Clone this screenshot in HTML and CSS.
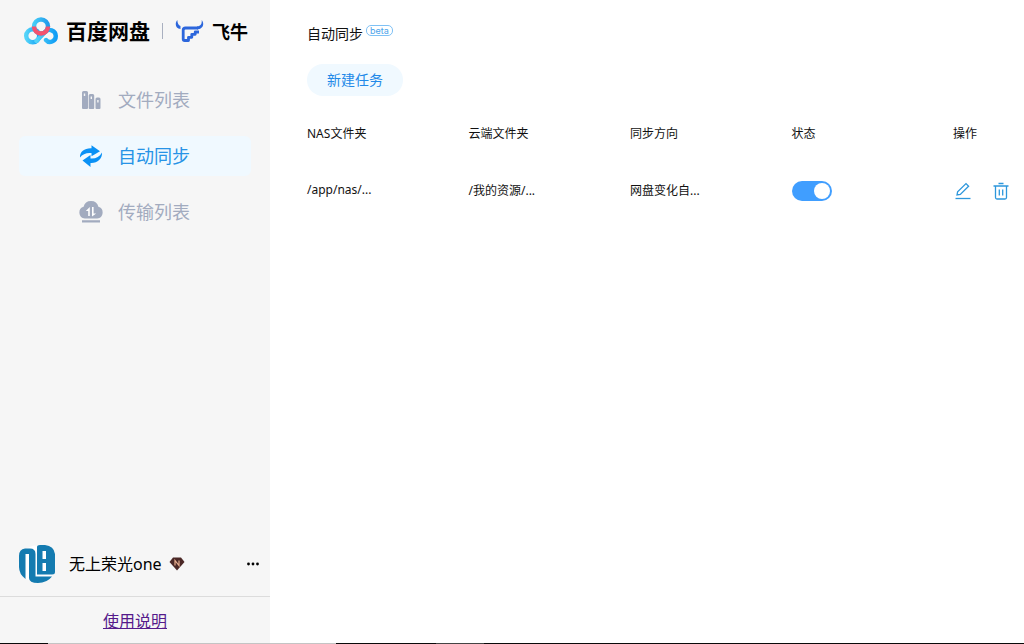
FILE: index.html
```html
<!DOCTYPE html>
<html lang="zh-CN">
<head>
<meta charset="utf-8">
<title>自动同步</title>
<link rel="stylesheet" href="styles.css">
</head>
<body>
<div class="app">
  <aside class="sidebar">
    <header class="brand">
      <svg class="brand-pan" viewBox="0 0 34 28" width="34" height="28" aria-hidden="true">
        <defs>
          <linearGradient id="blue" x1="0" x2="1"><stop offset="0" stop-color="#53d3f8"/><stop offset="1" stop-color="#109df5"/></linearGradient>
          <linearGradient id="top" x1="0" x2="1"><stop offset="0" stop-color="#45cdf7"/><stop offset="1" stop-color="#239cec"/></linearGradient>
        </defs>
        <g fill="none" stroke-width="4.400">
          <circle cx="8.700" cy="18.800" r="6.500" stroke="url(#blue)"/>
          <path d="M12.500 24l8-8.500c4-5 11.300-2 11.300 3.500 0 5.500-6.500 8-9.800 4" stroke="url(#blue)" stroke-linecap="round"/>
          <circle cx="17" cy="9.500" r="7" stroke="url(#top)"/>
          <path d="M10 9.500a7 7 0 0 0 14 0" stroke="#f4526e"/>
        </g>
      </svg>
      <span class="brand-name">百度网盘</span>
      <span class="brand-divider"></span>
      <svg class="brand-fn" viewBox="0 0 30 24" width="30" height="24" aria-hidden="true">
        <path fill="#2c66dc" d="M2.300 1C-.5 4.500.5 9.500 5.500 10V7C3.500 6.500 2.500 4 2.300 1zM26.700 1c3.500 4.500.5 9.500-4.700 9.500V7.500c3.500 0 5.200-2.500 4.700-6.500z"/>
        <path fill="none" stroke="#2c66dc" stroke-width="2.800" stroke-linejoin="round" d="M23 9H10.500Q8.200 9 8.200 11.300V20q0 1.500 1.500 1.500H13.500v-3.200h3.300v-3h3.400v-2.300H24"/>
      </svg>
      <span class="brand-partner">飞牛</span>
    </header>

    <nav class="nav">
      <a class="nav-item" href="#files">
        <svg viewBox="0 0 24 24" width="24" height="24" aria-hidden="true">
          <path fill="#a2abbf" fill-rule="evenodd" d="M4.500 3h3Q9 3 9 4.500V20q0 1-1 1H4Q3 21 3 20V4.500Q3 3 4.500 3zm.3 2.500V8h1.400V5.500zM11.200 6h2.500q1.500 0 1.500 1.500V20q0 1-1 1h-3.500q-1 0-1-1V7.500Q9.700 6 11.200 6zm.4 2.500V11h1.400V8.500zM18 9.500h2q1.500 0 1.500 1.500v9q0 1-1 1h-3q-1 0-1-1v-9q0-1.500 1.500-1.500zm.2 2.500v2.500h1.400V12z"/>
        </svg>
        <span>文件列表</span>
      </a>
      <a class="nav-item active" href="#sync" aria-current="page">
        <svg viewBox="0 0 24 24" width="24" height="24" aria-hidden="true">
          <path fill="#0a91f5" d="M1 13.500C.5 7.500 6 3.800 12.500 4.200V1.200l8.500 6-8.500 5V9C7.500 8.500 3.500 10 1 13.500zM23 8.500c.5 6.500-5 11-11.500 10.500v4l-8-6.500 8-5.500v3.500c5 .5 9-1.500 11.500-6z"/>
        </svg>
        <span>自动同步</span>
      </a>
      <a class="nav-item" href="#transfer">
        <svg viewBox="0 0 24 24" width="24" height="24" aria-hidden="true">
          <path fill="#a2abbf" d="M5.800 18.500A6 6 0 0 1 4.600 6.800a7.600 7.600 0 0 1 14.800 0 6 6 0 0 1-1.200 11.700zM3 20.200h18v2.300H3z"/>
          <path fill="#fff" d="M10.800 7v9H9.200v-5H6.800zM13 7h1.600v6.500H17.200L13 16.500z"/>
        </svg>
        <span>传输列表</span>
      </a>
    </nav>

    <section class="user">
      <svg class="avatar" viewBox="0 0 38 38" width="38" height="38" role="img" aria-label="头像">
        <circle cx="19" cy="19" r="18.500" fill="#fff"/>
        <g fill="#147bb0">
          <path d="M1 11Q1 4 7 3.500h5Q17.500 3.500 17.500 9V31.500H34Q29 38 20 38q-9 0-9-5V9H7.500v25Q1 29 1 22z"/>
          <path fill-rule="evenodd" d="M19 2q0-2 3-2h5q9 1 10 9v18q0 2.500-3 2.500H19zm5.500 4v8H28V6zm0 12v8H28v-8z"/>
        </g>
      </svg>
      <span class="user-name">无上荣光one</span>
      <svg class="gem" viewBox="0 0 16 14" width="16" height="14" aria-hidden="true">
        <path fill="#4b2826" d="M4 .5h8l3.500 4.500L8 13.500.5 5z"/>
        <path fill="none" stroke="#e7ad8e" stroke-width="1.200" d="M6 8.500v-5l4 5v-5"/>
      </svg>
      <button class="more" type="button" aria-label="更多">
        <svg viewBox="0 0 12 4" width="12" height="4" aria-hidden="true"><circle cx="1.500" cy="2" r="1.400"/><circle cx="6" cy="2" r="1.400"/><circle cx="10.500" cy="2" r="1.400"/></svg>
      </button>
    </section>
    <footer class="help"><a href="#help">使用说明</a></footer>
  </aside>

  <main class="content">
    <h1 class="title">自动同步<span class="beta">beta</span></h1>
    <button class="create" type="button">新建任务</button>
    <table class="tasks">
      <thead>
        <tr><th>NAS文件夹</th><th>云端文件夹</th><th>同步方向</th><th>状态</th><th class="ops">操作</th></tr>
      </thead>
      <tbody>
        <tr>
          <td>/app/nas/...</td>
          <td>/我的资源/...</td>
          <td>网盘变化自...</td>
          <td><input class="switch" type="checkbox" role="switch" aria-label="状态" checked></td>
          <td class="ops">
            <div class="actions">
              <button type="button" aria-label="编辑">
                <svg viewBox="0 0 18 18" width="18" height="18" aria-hidden="true">
                  <path d="M3 13l.6-3.200L12 1.600l2.600 2.600-8.300 8.200z"/><path d="M1.500 16.500h15"/>
                </svg>
              </button>
              <button type="button" aria-label="删除">
                <svg viewBox="0 0 18 18" width="18" height="18" aria-hidden="true">
                  <path d="M1.500 4h15M6.500 1.500h5M3.500 4v11.500q0 1.500 1.500 1.500h8q1.500 0 1.500-1.500V4M7.300 7.500v6M10.700 7.500v6"/>
                </svg>
              </button>
            </div>
          </td>
        </tr>
      </tbody>
    </table>
  </main>
</div>
<div class="edge"></div>
</body>
</html>
```
FILE: styles.css
```css
* {
  box-sizing: border-box;
}

body {
  margin: 0;
  height: 100vh;
  display: flex;
  flex-direction: column;
  overflow: hidden;
  background: #fff;
  color: #111;
  font-family: "Noto Sans", "Noto Sans CJK SC", sans-serif;
  font-size: 12px;
}

button {
  padding: 0;
  border: 0;
  background: none;
  font: inherit;
  cursor: pointer;
}

svg {
  display: block;
  flex: none;
}

.app {
  flex: 1;
  display: flex;
  min-height: 0;
}

.sidebar {
  flex: none;
  width: 270px;
  display: flex;
  flex-direction: column;
  background: #f6f6f6;
}

.brand {
  display: flex;
  align-items: center;
  height: 60px;
  padding: 1px 20px 0 24px;
  font-weight: 700;
  color: #000;
  white-space: nowrap;
}

.brand-name {
  margin-left: 8px;
  font-size: 21px;
  line-height: 28px;
}

.brand-divider {
  width: 1px;
  height: 16px;
  margin: 0 12px;
  background: #a9b0c0;
}

.brand-partner {
  margin-left: 7px;
  font-size: 18px;
}

.nav {
  display: flex;
  flex-direction: column;
  gap: 16px;
  padding: 20px 19px;
}

.nav-item {
  display: flex;
  align-items: center;
  gap: 15px;
  height: 40px;
  padding-left: 60px;
  border-radius: 6px;
  color: #a2abbf;
  font-size: 18px;
  line-height: 24px;
  text-decoration: none;
}

.nav-item.active {
  background: #f0f9ff;
  color: #2793e6;
}

.user {
  display: flex;
  align-items: center;
  margin-top: auto;
  padding: 12px 11px 13px 18px;
  color: #000;
  font-size: 16px;
}

.user-name {
  margin: 0 7px 0 13px;
  line-height: 20px;
}

.more {
  margin-left: auto;
}

.help {
  height: 47px;
  border-top: 1px solid #dcdcdc;
  text-align: center;
  font-size: 16px;
  line-height: 48px;
}

.help a {
  color: #551a8b;
}

.content {
  flex: 1;
  min-width: 0;
  padding: 24px 0 0 37px;
}

.title {
  display: flex;
  margin: 0 0 20px;
  font-size: 14px;
  font-weight: 400;
  line-height: 20px;
}

.beta {
  height: 11px;
  margin: 1px 0 0 3px;
  padding: 0 3px;
  border: 1px solid #7fc1f5;
  border-radius: 5px;
  color: #4ba3ea;
  font-family: Inter, sans-serif;
  font-size: 9px;
  line-height: 9px;
}

.create {
  display: block;
  width: 96px;
  height: 32px;
  border-radius: 16px;
  background: #f0f9ff;
  color: #2289e8;
  font-size: 14px;
  line-height: 30px;
}

.tasks {
  width: 100%;
  margin-top: 8px;
  border-collapse: collapse;
  table-layout: fixed;
}

.tasks th,
.tasks td {
  height: 57px;
  padding: 0;
  text-align: left;
  font-weight: 400;
}

.tasks th.ops,
.tasks td.ops {
  width: 71px;
}

.switch {
  appearance: none;
  display: block;
  width: 40px;
  height: 20px;
  margin: 2px 0 0;
  padding: 2px;
  border-radius: 10px;
  background: #409eff;
}

.switch::before {
  content: "";
  display: block;
  width: 16px;
  height: 16px;
  margin-left: auto;
  border-radius: 8px;
  background: #fff;
}

.switch:not(:checked) {
  background: #dcdfe6;
}

.switch:not(:checked)::before {
  margin-left: 0;
}

.actions {
  display: flex;
  gap: 20px;
  padding: 2px 0 0 1px;
}

.actions svg {
  fill: none;
  stroke: #2d97dc;
  stroke-width: 1.3;
}

.edge {
  flex: none;
  height: 1px;
  background: linear-gradient(90deg, #0a0a0a 48px, #c4c4c4 48px 336px, #0a0a0a 336px 436px, #444 436px 484px, #0a0a0a 484px);
}
```
